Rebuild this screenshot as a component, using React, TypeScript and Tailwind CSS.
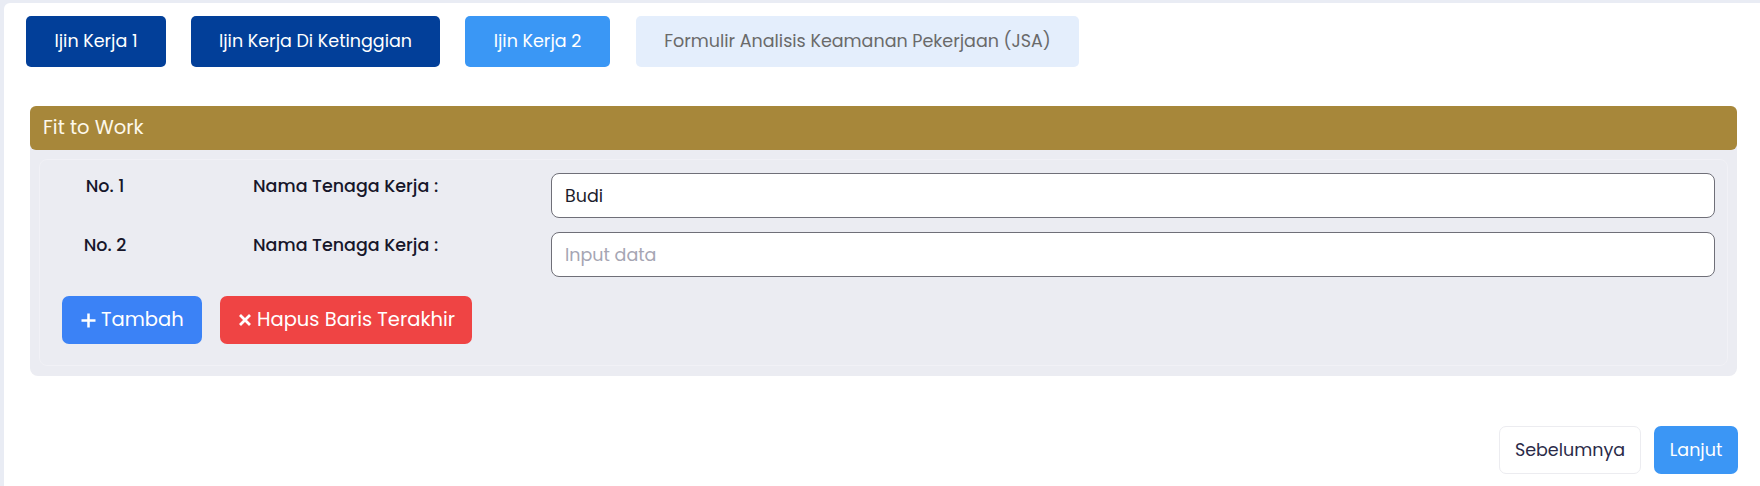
import React from "react";

const font = { fontFamily: '"Poppins", "Open Sans", "Noto Sans", sans-serif' };

function PlusIcon() {
  return (
    <svg width="15" height="15" viewBox="0 0 15 15" className="shrink-0">
      <path d="M7.5 0.5V14.5M0.5 7.5H14.5" stroke="white" strokeWidth="2.5" />
    </svg>
  );
}

function XIcon() {
  return (
    <svg width="12" height="12" viewBox="0 0 12 12" className="shrink-0">
      <path d="M1 1L11 11M11 1L1 11" stroke="white" strokeWidth="2.8" />
    </svg>
  );
}

function Row({ no, value }: { no: string; value?: string }) {
  return (
    <div className="flex items-start">
      <div className="w-[86px] text-center text-[17.5px] leading-[26px] font-medium text-[#16162a]">{no}</div>
      <div className="ml-[105px] w-[298px] text-[17.5px] leading-[26px] font-medium text-[#16162a]">Nama Tenaga Kerja :</div>
      <input
        className="flex-1 h-[45px] rounded-[8px] border border-[#6f6f78] bg-white px-[13px] text-[17.5px] text-[#1c1c2c] placeholder:text-[#a5a5b3] outline-none"
        style={font}
        defaultValue={value}
        placeholder="Input data"
      />
    </div>
  );
}

export default function App() {
  return (
    <div className="min-h-[486px] bg-[#e9ecf4] pl-[4px] pt-[3px]" style={font}>
      <div className="min-h-[483px] rounded-tl-[6px] bg-white pl-[22px] pr-[22px] pt-[13px]">
        <div className="flex gap-[25px]">
          <button className="h-[51px] w-[140px] rounded-[5px] bg-[#023f99] text-[17.5px] text-white">Ijin Kerja 1</button>
          <button className="h-[51px] w-[249px] rounded-[5px] bg-[#023f99] text-[17.5px] text-white">Ijin Kerja Di Ketinggian</button>
          <button className="h-[51px] w-[145px] rounded-[5px] bg-[#3a97f5] text-[17.5px] text-white">Ijin Kerja 2</button>
          <button className="ml-[1px] h-[51px] w-[443px] rounded-[5px] bg-[#e4eefc] text-[17.5px] text-[#6a6a6a]">Formulir Analisis Keamanan Pekerjaan (JSA)</button>
        </div>

        <div className="ml-[4px] mr-[1px] mt-[39px] rounded-[8px] bg-[#ebecf2]">
          <div className="flex h-[44px] items-center rounded-[6px] bg-[#a7873a] pl-[13px] text-[19.5px] text-[#fdf8ea]">Fit to Work</div>
          <div className="p-[9px] pb-[10px]">
            <div className="rounded-[8px] border border-[#f1f1f6] pb-[21px] pl-[22px] pr-[12px] pt-[13px]">
              <div className="flex flex-col gap-[14px]">
                <Row no="No. 1" value="Budi" />
                <Row no="No. 2" />
              </div>
              <div className="mt-[19px] flex gap-[18px]">
                <button className="flex h-[48px] w-[140px] items-center gap-[5px] rounded-[7px] bg-[#3b82f6] pl-[19px] text-[19.5px] text-white">
                  <PlusIcon />
                  <span>Tambah</span>
                </button>
                <button className="flex h-[48px] w-[252px] items-center gap-[6px] rounded-[7px] bg-[#ef4444] pl-[19px] text-[19.5px] text-white">
                  <XIcon />
                  <span>Hapus Baris Terakhir</span>
                </button>
              </div>
            </div>
          </div>
        </div>

        <div className="mt-[50px] flex justify-end gap-[13px]">
          <button className="h-[48px] w-[142px] rounded-[7px] border border-[#ececf0] bg-white text-[17.5px] text-[#2a2a48]">Sebelumnya</button>
          <button className="h-[48px] w-[84px] rounded-[7px] bg-[#3b96f5] text-[17.5px] text-white">Lanjut</button>
        </div>
      </div>
    </div>
  );
}
